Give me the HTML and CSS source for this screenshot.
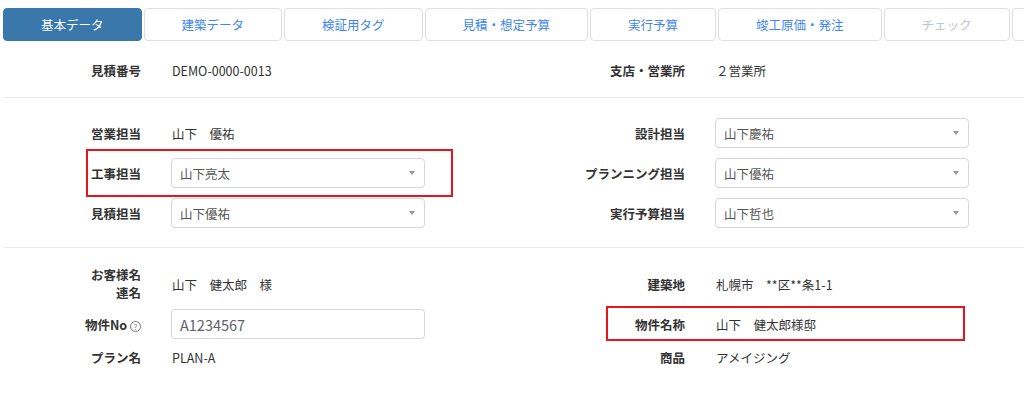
FILE: index.html
```html
<!DOCTYPE html>
<html lang="ja">
<head>
<meta charset="utf-8">
<title>基本データ</title>
<link rel="stylesheet" href="styles.css">
</head>
<body>
<div class="tabs">
  <div class="tab active">基本データ</div>
  <div class="tab">建築データ</div>
  <div class="tab">検証用タグ</div>
  <div class="tab">見積・想定予算</div>
  <div class="tab">実行予算</div>
  <div class="tab">竣工原価・発注</div>
  <div class="tab disabled">チェック</div>
  <div class="tab tab-edge"></div>
</div>

<div class="sec sec1">
  <div class="fld"><div class="lbl">見積番号</div><div class="val">DEMO-0000-0013</div></div>
  <div class="fld"><div class="lbl">支店・営業所</div><div class="val">２営業所</div></div>
</div>

<div class="sec sec2">
  <div class="fld"><div class="lbl">営業担当</div><div class="val">山下　優祐</div></div>
  <div class="fld"><div class="lbl">設計担当</div><div class="sel"><span>山下慶祐</span><i class="arrow"></i></div></div>
  <div class="fld mark1"><div class="lbl">工事担当</div><div class="sel"><span>山下亮太</span><i class="arrow"></i></div></div>
  <div class="fld"><div class="lbl">プランニング担当</div><div class="sel"><span>山下優祐</span><i class="arrow"></i></div></div>
  <div class="fld"><div class="lbl">見積担当</div><div class="sel"><span>山下優祐</span><i class="arrow"></i></div></div>
  <div class="fld"><div class="lbl">実行予算担当</div><div class="sel"><span>山下哲也</span><i class="arrow"></i></div></div>
</div>

<div class="sec sec3">
  <div class="fld"><div class="lbl two">お客様名<br>連名</div><div class="val">山下　健太郎　様</div></div>
  <div class="fld"><div class="lbl">建築地</div><div class="val">札幌市　**区**条1-1</div></div>
  <div class="fld"><div class="lbl">物件No <span class="help">?</span></div><div class="inp">A1234567</div></div>
  <div class="fld mark2"><div class="lbl">物件名称</div><div class="val">山下　健太郎様邸</div></div>
  <div class="fld short"><div class="lbl">プラン名</div><div class="val">PLAN-A</div></div>
  <div class="fld short"><div class="lbl">商品</div><div class="val">アメイジング</div></div>
</div>
</body>
</html>
```
FILE: styles.css
```css
html, body {
  margin: 0;
  padding: 0;
  background: #fff;
  overflow: hidden;
}
body {
  font-family: "Noto Sans CJK JP", "Noto Sans", sans-serif;
  font-size: 12.5px;
  color: #333;
  width: 1024px;
  height: 417px;
}
.tabs {
  display: flex;
  gap: 2px;
  padding: 8px 0 0 3px;
  white-space: nowrap;
  overflow: hidden;
}
.tab {
  flex: none;
  height: 31px;
  line-height: 31px;
  padding: 0 37px;
  border: 1px solid #dcdfe6;
  border-radius: 4px;
  color: #3f86ee;
  font-size: 12.5px;
  background: #fff;
}
.tab.active {
  background: #3a77ab;
  border-color: #3a77ab;
  color: #fff;
}
.tab.disabled {
  color: #c0c4cc;
}
.tab.tab-edge {
  width: 60px;
  padding: 0;
}
.sec {
  display: grid;
  grid-template-columns: 544px 1fr;
  margin-left: 4px;
  border-bottom: 1px solid #e8e8ed;
}
.sec1 {
  padding: 14px 0 12px;
}
.sec2 {
  padding: 20px 0 19px;
  row-gap: 10px;
}
.sec3 {
  padding: 18px 0 0;
  row-gap: 7px;
  border-bottom: none;
}
.fld {
  display: flex;
  align-items: center;
  min-height: 30px;
  position: relative;
}
.fld.short {
  min-height: 22px;
}
.lbl {
  flex: none;
  width: 137px;
  margin-right: 30px;
  text-align: right;
  font-weight: bold;
  color: #333;
}
.lbl.two {
  line-height: 18px;
}
.val {
  padding-left: 1px;
  color: #333;
}
.sel, .inp {
  box-sizing: border-box;
  width: 254px;
  height: 30px;
  border: 1px solid #d4d6db;
  border-radius: 4px;
  padding: 0 8px;
  display: flex;
  align-items: center;
  justify-content: space-between;
  color: #555;
}
.inp {
  font-size: 14.5px;
  color: #606266;
}
.arrow {
  width: 0;
  height: 0;
  border-left: 3.5px solid transparent;
  border-right: 3.5px solid transparent;
  border-top: 4px solid #909399;
  margin-right: 1px;
}
.help {
  display: inline-block;
  box-sizing: border-box;
  width: 11px;
  height: 11px;
  border: 1px solid #777;
  border-radius: 50%;
  font-size: 8px;
  line-height: 9px;
  text-align: center;
  font-weight: normal;
  color: #777;
  vertical-align: 0px;
}
.mark1::after, .mark2::after {
  content: "";
  position: absolute;
  border: 2px solid #e8141c;
  pointer-events: none;
}
.mark1::after {
  left: 82px;
  width: 363px;
  top: -9px;
  bottom: -9px;
}
.mark2::after {
  left: 58px;
  width: 355px;
  top: -3px;
  bottom: -2px;
}
```
